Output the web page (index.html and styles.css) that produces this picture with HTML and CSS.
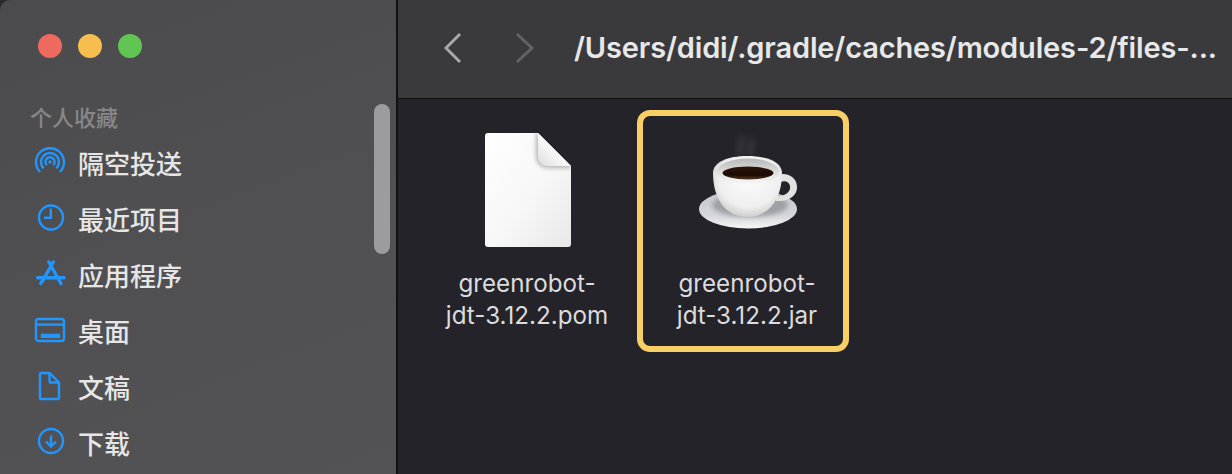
FILE: index.html
```html
<!DOCTYPE html>
<html lang="zh-CN">
<head>
<meta charset="utf-8">
<title>Finder</title>
<link rel="stylesheet" href="styles.css">
</head>
<body>
<div class="window">
  <aside class="sidebar">
    <div class="lights">
      <span class="light red"></span>
      <span class="light yellow"></span>
      <span class="light green"></span>
    </div>
    <div class="heading">个人收藏</div>
    <ul class="places">
      <li class="place">
        <svg class="glyph" viewBox="0 0 32 32"><path d="M6 26A14 14 0 1 1 26 26"/><path d="M9.6 22.4A9 9 0 1 1 22.4 22.4"/><path d="M12.8 19.2A4.6 4.6 0 1 1 19.2 19.2"/><circle class="solid" cx="16" cy="16" r="1.7"/></svg>
        <span>隔空投送</span>
      </li>
      <li class="place">
        <svg class="glyph" viewBox="0 0 32 32"><circle cx="17" cy="15.5" r="12"/><path d="M16.8 6.5V15.8H10"/></svg>
        <span>最近项目</span>
      </li>
      <li class="place">
        <svg class="glyph" viewBox="0 0 32 32"><path class="thick" d="M14.8 4 27 25.6M19.3 4 8.2 23.6M3.6 19.7H30"/><path class="thick" d="M6.8 25.6 7.6 24"/></svg>
        <span>应用程序</span>
      </li>
      <li class="place">
        <svg class="glyph" viewBox="0 0 32 32"><rect x="2" y="5" width="28" height="22" rx="2.5"/><path d="M2 10.6H30"/><rect class="solid" x="6.8" y="19.7" width="19.4" height="4.3"/></svg>
        <span>桌面</span>
      </li>
      <li class="place">
        <svg class="glyph" viewBox="0 0 32 32"><path d="M7 3H15.5L25 12.5V28A1 1 0 0 1 24 29H7A1 1 0 0 1 6 28V4A1 1 0 0 1 7 3Z"/><path d="M15.5 3V11.5A1 1 0 0 0 16.5 12.5H25"/></svg>
        <span>文稿</span>
      </li>
      <li class="place">
        <svg class="glyph" viewBox="0 0 32 32"><circle cx="17" cy="15" r="12"/><path d="M17 9.5V20M12 15.5 17 20.5 22 15.5"/></svg>
        <span>下载</span>
      </li>
    </ul>
    <div class="thumb"></div>
  </aside>
  <section class="content">
    <header class="toolbar">
      <div class="nav">
        <svg class="chevron" viewBox="0 0 24 34"><path d="M19 3 5 17 19 31"/></svg>
        <svg class="chevron off" viewBox="0 0 24 34"><path d="M4 3 19 17 4 31"/></svg>
      </div>
      <h1 class="path">/Users/didi/.gradle/caches/modules-2/files-...</h1>
    </header>
    <main class="files">
      <figure class="file">
        <svg class="icon" viewBox="467 125 120 130">
          <defs>
            <linearGradient id="page" x1="0" y1="0" x2="1" y2="1">
              <stop offset="0" stop-color="#ffffff"/><stop offset="0.55" stop-color="#f7f7f7"/><stop offset="1" stop-color="#e8e8e9"/>
            </linearGradient>
            <linearGradient id="fold" x1="1" y1="0" x2="0" y2="1">
              <stop offset="0.5" stop-color="#fbfbfb"/><stop offset="1" stop-color="#dcdcdd"/>
            </linearGradient>
            <filter id="fold-shadow" x="-40%" y="-40%" width="180%" height="180%"><feGaussianBlur stdDeviation="2"/></filter>
            <clipPath id="sheet"><path d="M488 133H538L571 166V244A3 3 0 0 1 568 247H488A3 3 0 0 1 485 244V136A3 3 0 0 1 488 133Z"/></clipPath>
          </defs>
          <path fill="url(#page)" d="M488 133H538L571 166V244A3 3 0 0 1 568 247H488A3 3 0 0 1 485 244V136A3 3 0 0 1 488 133Z"/>
          <g clip-path="url(#sheet)">
            <path fill="#b4b4b6" filter="url(#fold-shadow)" d="M538 133 571 166V168H548C540 168 536 162 536 156V133Z"/>
          </g>
          <path fill="url(#fold)" d="M538 133 571 166H548C542 166 538 162 538 156Z"/>
        </svg>
        <figcaption class="name">greenrobot-<br>jdt-3.12.2.pom</figcaption>
      </figure>
      <figure class="file selected">
        <svg class="icon" viewBox="687 125 120 130">
          <defs>
            <linearGradient id="plate" x1="0" y1="0" x2="0" y2="1">
              <stop offset="0" stop-color="#c3c6cc"/><stop offset="0.65" stop-color="#d3d5d9"/><stop offset="1" stop-color="#f6f6f7"/>
            </linearGradient>
            <radialGradient id="body" cx="0.52" cy="0.4" r="0.66">
              <stop offset="0" stop-color="#fbfbfb"/><stop offset="0.66" stop-color="#efefef"/><stop offset="0.88" stop-color="#d2d2d2"/><stop offset="1" stop-color="#b4b4b4"/>
            </radialGradient>
            <linearGradient id="coffee" x1="0" y1="0" x2="0" y2="1">
              <stop offset="0" stop-color="#2e1608"/><stop offset="0.65" stop-color="#190b05"/><stop offset="1" stop-color="#54331d"/>
            </linearGradient>
            <linearGradient id="rim" x1="0" y1="0" x2="0" y2="1">
              <stop offset="0" stop-color="#b8b8b8"/><stop offset="0.5" stop-color="#dedede"/><stop offset="1" stop-color="#fafafa"/>
            </linearGradient>
            <filter id="soft" x="-50%" y="-50%" width="200%" height="200%"><feGaussianBlur stdDeviation="2.2"/></filter>
            <filter id="hazy" x="-100%" y="-50%" width="300%" height="200%"><feGaussianBlur stdDeviation="3"/></filter>
            <filter id="tiny" x="-20%" y="-20%" width="140%" height="140%"><feGaussianBlur stdDeviation="0.6"/></filter>
          </defs>
          <path class="steam" filter="url(#hazy)" d="M741 156C737 148 744 144 741 136M751 156C748 148 754 144 751 138"/>
          <ellipse cx="748" cy="209" rx="49" ry="19.5" fill="url(#plate)"/>
          <ellipse cx="750" cy="205" rx="38" ry="12" fill="#9da0a6" filter="url(#soft)"/>
          <path d="M775 177C781 171 796 174 797 186 798 196 788 202 776 201L776 196C785 197 791 192 790 186 789 180 782 180 777 184Z" fill="#e2e2e2"/>
          <path d="M713 173C713 162 728 156 747 156 767 156 782 162 782 173 782 198 770 217 747 217 725 217 713 198 713 173Z" fill="url(#body)"/>
          <ellipse cx="748" cy="172" rx="31" ry="13.5" fill="url(#rim)" filter="url(#tiny)"/>
          <ellipse cx="748" cy="173" rx="25.5" ry="6.4" fill="url(#coffee)"/>
        </svg>
        <figcaption class="name">greenrobot-<br>jdt-3.12.2.jar</figcaption>
      </figure>
    </main>
  </section>
</div>
</body>
</html>
```
FILE: styles.css
```css
* { box-sizing: border-box; }
html, body { margin: 0; height: 100%; background: #2a2a2c; overflow: hidden; }
.window {
  display: flex;
  width: 1232px;
  height: 474px;
  overflow: hidden;
  border-top-left-radius: 10px;
  font-family: "Noto Sans CJK SC", "Inter", sans-serif;
}
.sidebar {
  position: relative;
  flex: 0 0 396px;
  padding-top: 34px;
  background: linear-gradient(160deg, #4b4b4d, #505052 50%, #535355);
}
.lights { display: flex; gap: 16px; padding-left: 38px; }
.light { width: 24px; height: 24px; border-radius: 50%; }
.red { background: #ef6a5e; }
.yellow { background: #f6be4f; }
.green { background: #61c554; }
.heading {
  margin: 42px 0 0 30px;
  height: 34px;
  font-size: 22px;
  font-weight: 500;
  line-height: 32px;
  color: #87878a;
}
.places { list-style: none; margin: 0; padding: 0 0 0 34px; }
.place {
  display: flex;
  align-items: center;
  gap: 12px;
  height: 56px;
  font-size: 26px;
  font-weight: 500;
  color: #e6e6e6;
}
.glyph { width: 32px; height: 32px; fill: none; stroke: #2196ff; stroke-width: 2.4; flex: none; }
.glyph .solid { fill: #2196ff; stroke: none; }
.glyph .thick { stroke-width: 3.4; stroke-linecap: round; }
.thumb {
  position: absolute;
  left: 374px;
  top: 104px;
  width: 16px;
  height: 150px;
  border-radius: 8px;
  background: #9c9c9e;
}
.content {
  flex: 1;
  display: flex;
  flex-direction: column;
  border-left: 2px solid #111113;
  min-width: 0;
}
.toolbar {
  display: flex;
  align-items: center;
  height: 99px;
  padding: 0 0 3px 43px;
  background: #3a3a3c;
  border-bottom: 1px solid #0e0e10;
}
.nav { display: flex; gap: 48px; width: 133px; flex: none; }
.chevron { width: 24px; height: 34px; fill: none; stroke: #a9a9ab; stroke-width: 2.9; flex: none; }
.chevron.off { stroke: #636365; }
.path {
  margin: 0;
  font-family: "Inter", sans-serif;
  font-size: 29px;
  font-weight: 600;
  letter-spacing: -0.15px;
  color: #e8e8e8;
  white-space: nowrap;
}
.files {
  flex: 1;
  display: flex;
  gap: 4px;
  align-items: flex-start;
  padding: 11px 0 0 23px;
  background: #25232a;
}
.file {
  width: 212px;
  height: 242px;
  margin: 0;
  padding: 9px 0 0;
  border: 6px solid transparent;
  border-radius: 13px;
  text-align: center;
}
.file.selected { border-color: #f8cf65; padding-left: 8px; }
.icon { display: block; width: 120px; height: 130px; margin: 0 auto; }
.steam { fill: none; stroke: #6a6a6e; stroke-width: 4; opacity: 0.4; }
.name {
  margin-top: 13px;
  font-family: "Inter", sans-serif;
  font-size: 24.2px;
  line-height: 32px;
  color: #dcdcdc;
  white-space: nowrap;
}
```
